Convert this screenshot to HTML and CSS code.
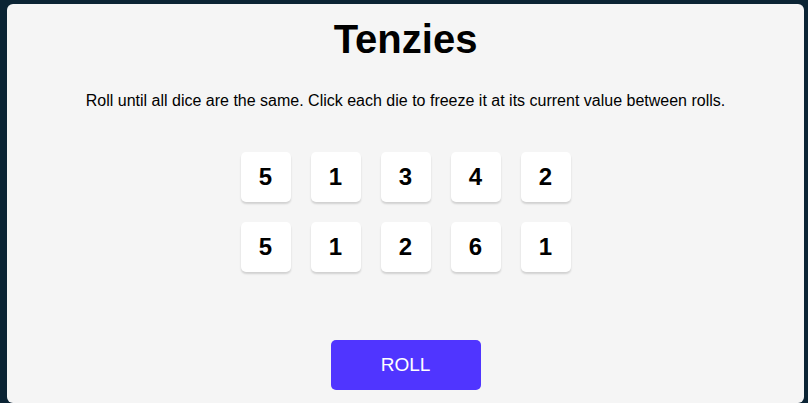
FILE: index.html
```html
<!DOCTYPE html>
<html lang="en">
<head>
<meta charset="utf-8">
<title>Tenzies</title>
<link rel="stylesheet" href="styles.css">
</head>
<body>
<main class="board">
  <h1 class="title">Tenzies</h1>
  <p class="instructions">Roll until all dice are the same. Click each die to freeze it at its current value between rolls.</p>
  <div class="dice">
    <button class="die">5</button>
    <button class="die">1</button>
    <button class="die">3</button>
    <button class="die">4</button>
    <button class="die">2</button>
    <button class="die">5</button>
    <button class="die">1</button>
    <button class="die">2</button>
    <button class="die">6</button>
    <button class="die">1</button>
  </div>
  <button class="roll">ROLL</button>
</main>
</body>
</html>
```
FILE: styles.css
```css
* { box-sizing: border-box; }
html, body { height: 100%; }
body {
  margin: 0;
  padding: 4px 4px 0 7px;
  background: #0B2434;
  font-family: "Liberation Sans", Arial, sans-serif;
  overflow: hidden;
}
.board {
  background: #F5F5F5;
  border-radius: 6px;
  height: 399px;
  display: flex;
  flex-direction: column;
  align-items: center;
  padding-top: 12px;
}
.title {
  margin: 0;
  font-size: 40px;
  line-height: 46px;
  font-weight: 700;
  color: #000;
}
.instructions {
  margin: 30px 0 0;
  font-size: 16px;
  line-height: 18px;
  color: #000;
  text-align: center;
}
.dice {
  margin-top: 42px;
  display: grid;
  grid-template-columns: repeat(5, 50px);
  grid-auto-rows: 50px;
  gap: 20px;
}
.die {
  border: none;
  background: #FFFFFF;
  border-radius: 5px;
  box-shadow: 0 2px 2px rgba(0, 0, 0, 0.15);
  font-family: "Liberation Sans", Arial, sans-serif;
  font-size: 24px;
  font-weight: 700;
  color: #000;
  padding: 0;
}
.roll {
  margin-top: 68px;
  width: 150px;
  height: 50px;
  flex-shrink: 0;
  border: none;
  border-radius: 5px;
  background: #5035FF;
  color: #FFFFFF;
  font-family: "Liberation Sans", Arial, sans-serif;
  font-size: 19px;
  padding: 0;
}
```
